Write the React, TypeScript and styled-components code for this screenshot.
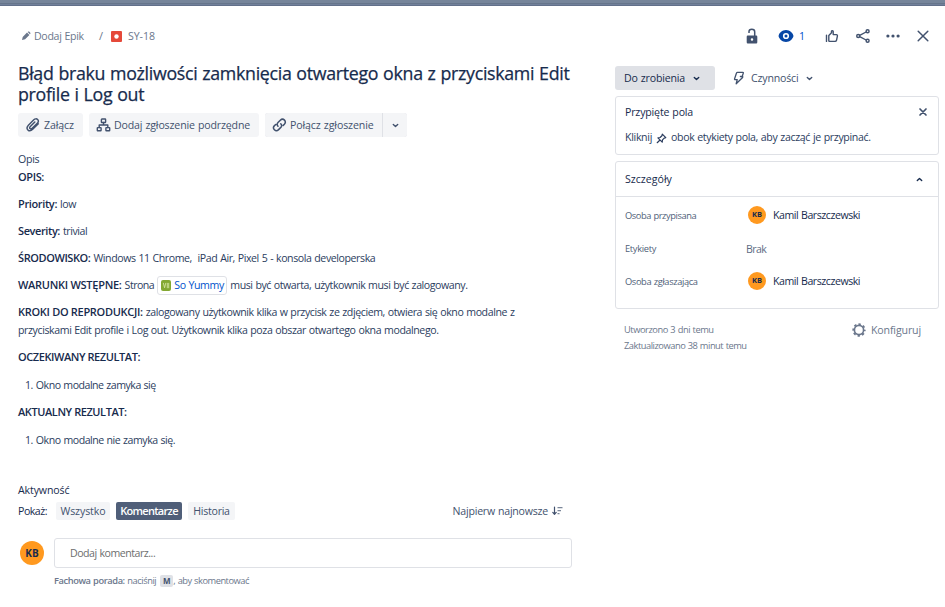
import React from "react";
import styled, { createGlobalStyle } from "styled-components";

const ink = "#172b4d";
const body = "#2b3d5e";
const slate = "#42526e";
const muted = "#6b778c";
const line = "#dfe1e6";

const GlobalStyle = createGlobalStyle`
  * { box-sizing: border-box; }
  body { margin: 0; background: #fff; font-family: "Open Sans", "Noto Sans", sans-serif; color: ${ink}; }
  button { font: inherit; border: 0; padding: 0; background: none; color: inherit; }
`;

const T = styled.span<{ $ls?: number; $c?: string }>`
  display: block;
  letter-spacing: ${(p) => p.$ls ?? -0.35}px;
  word-spacing: 0.5px;
  font-size: 10.6px;
  line-height: 18px;
  font-weight: 400;
  color: ${(p) => p.$c ?? "inherit"};
  white-space: pre;
`;
const Strong = styled(T)`
  font-size: 11px;
  font-weight: 600;
  word-spacing: 0;
`;
const Small = styled(T)<{ $bold?: boolean }>`
  font-size: 9.3px;
  line-height: 16px;
  font-weight: ${(p) => (p.$bold ? 600 : 400)};
`;

const Page = styled.div`
  height: 607px;
  display: flex;
  flex-direction: column;
  overflow: hidden;
`;
const Backdrop = styled.div`
  height: 6px;
  flex: none;
  background: linear-gradient(#76859a 0 3px, #66758b 3px 4px, #71809a 4px 5px, #62708a 5px 6px);
`;
const Modal = styled.main`
  flex: 1;
  display: grid;
  grid-template-columns: 554px 324px;
  column-gap: 43px;
  padding: 18px 6px 0 18px;
`;
const Column = styled.section`
  display: flex;
  flex-direction: column;
  min-width: 0;
`;

const Breadcrumbs = styled.nav`
  height: 24px;
  display: flex;
  align-items: center;
  color: ${muted};
  padding-left: 3px;
`;
const Slash = styled.span`
  font-size: 11px;
  line-height: 18px;
  width: 5px;
  margin: 0 7px 0 16px;
`;
const Svg = styled.svg`
  display: block;
  flex: none;
`;
const EpicLink = styled.span`
  display: flex;
  align-items: center;
  width: 62px;
  gap: 3px;
`;
const IssueLink = styled.span`
  display: flex;
  align-items: center;
  gap: 6px;
`;

const Title = styled.h1`
  margin: 15px 0 0;
  height: 42px;
  font-size: 17.8px;
  line-height: 21px;
  font-weight: 500;
  letter-spacing: -0.31px;
  word-spacing: 0.6px;
  -webkit-text-stroke: 0.25px ${ink};
`;

const QuickActions = styled.div`
  display: flex;
  gap: 6px;
  margin-top: 8px;
  height: 24px;
`;
const ActionButton = styled.button<{ $width: number }>`
  width: ${(p) => p.$width}px;
  height: 24px;
  display: flex;
  align-items: center;
  gap: 3px;
  padding-left: 7px;
  border-radius: 3px;
  background: #f4f5f7;
  color: ${slate};
`;
const SplitButton = styled.div`
  display: flex;
  gap: 1px;
  background: ${line};
  border-radius: 3px;
  overflow: hidden;
  & > button { border-radius: 0; }
`;
const SplitArrow = styled.button`
  width: 24px;
  display: grid;
  place-items: center;
  background: #f4f5f7;
  color: ${slate};
`;

const Description = styled.article`
  display: flex;
  flex-direction: column;
  margin-top: 13px;
  color: ${body};
`;
const SectionLabel = styled.h2`
  margin: 0;
  height: 18px;
  font-weight: 400;
`;
const Paragraph = styled.p`
  margin: 0 0 9px;
`;
const Line = styled.span`
  display: flex;
  height: 18px;
  align-items: center;
  gap: 3px;
  & > ${Strong} { color: ${ink}; }
`;
const OrderedList = styled.ol`
  list-style: none;
  margin: 1px 0 9px 7px;
  padding: 0;
`;
const OrderedItem = styled.li`
  display: flex;
  align-items: center;
  height: 18px;
  gap: 3px;
`;
const SmartLink = styled.a`
  display: flex;
  align-items: center;
  gap: 3px;
  width: 70px;
  height: 19px;
  padding-left: 3px;
  border: 1px solid ${line};
  border-radius: 3px;
  color: #0052cc;
`;

const Activity = styled.section`
  margin-top: 23px;
  display: flex;
  flex-direction: column;
`;
const FilterRow = styled.div`
  display: flex;
  align-items: center;
  height: 18px;
  margin-top: 3px;
`;
const Filters = styled.div`
  display: flex;
  gap: 6px;
  flex: 1;
`;
const FilterLabel = styled.span`
  width: 38px;
`;
const Filter = styled.button<{ $width: number; $active?: boolean }>`
  width: ${(p) => p.$width}px;
  height: 18px;
  border-radius: 2px;
  background: ${(p) => (p.$active ? "#505f79" : "#f4f5f7")};
  color: ${(p) => (p.$active ? "#fff" : slate)};
`;
const SortButton = styled.button`
  display: flex;
  align-items: center;
  gap: 4px;
  color: ${slate};
  margin-right: 9px;
`;
const CommentRow = styled.div`
  display: flex;
  align-items: center;
  margin: 18px 0 0 2px;
`;
const Avatar = styled.span<{ $d: number }>`
  width: ${(p) => p.$d}px;
  height: ${(p) => p.$d}px;
  flex: none;
  display: grid;
  place-items: center;
  border-radius: 50%;
  background: #ff991f;
  color: ${ink};
  font-size: ${(p) => (p.$d > 20 ? 10 : 7.5)}px;
  font-weight: 700;
  line-height: 1;
`;
const CommentBox = styled.div`
  flex: 1;
  height: 30px;
  margin-left: 10px;
  padding: 0 15px;
  display: flex;
  align-items: center;
  border: 1px solid ${line};
  border-radius: 3px;
  color: #6d6e6e;
`;
const Tip = styled.div`
  display: flex;
  align-items: center;
  height: 12px;
  margin: 7px 0 0 36px;
  color: ${muted};
`;
const Key = styled.kbd`
  width: 13px;
  height: 12px;
  margin-left: 4px;
  border-radius: 2px;
  background: ${line};
  color: ${slate};
  font: 700 8px/12px "Open Sans", sans-serif;
  text-align: center;
`;

const Toolbar = styled.div`
  display: flex;
  justify-content: flex-end;
  align-items: center;
  height: 24px;
  padding-right: 4px;
  color: ${slate};
`;
const IconButton = styled.button`
  width: 24px;
  height: 24px;
`;
const WatchButton = styled.button`
  display: flex;
  align-items: center;
  gap: 1px;
  width: 36px;
  margin: 0 10px 0 10px;
  color: #0747a6;
`;
const ToolGroup = styled.div`
  display: flex;
  gap: 6px;
  & > :first-child { margin-right: 1px; }
`;
const StatusRow = styled.div`
  display: flex;
  margin-top: 18px;
  height: 24px;
`;
const StatusButton = styled.button`
  width: 100px;
  display: flex;
  align-items: center;
  gap: 7px;
  padding-left: 9px;
  border-radius: 3px;
  background: ${line};
  color: ${ink};
`;
const AutomationButton = styled.button`
  display: flex;
  align-items: center;
  gap: 6px;
  margin-left: 18px;
  color: ${slate};
`;

const Panel = styled.section<{ $height: number }>`
  height: ${(p) => p.$height}px;
  margin-top: 6px;
  border: 1px solid ${line};
  border-radius: 3px;
`;
const PinnedHeader = styled.header`
  display: flex;
  align-items: center;
  justify-content: space-between;
  height: 18px;
  margin-top: 6px;
  padding: 0 10px 0 9px;
`;
const PinnedHint = styled.p`
  display: flex;
  align-items: center;
  height: 18px;
  margin: 7px 0 0 9px;
  color: ${body};
`;
const PinSlot = styled.span`
  margin: 2px 4px 0 4px;
`;
const DetailsHeader = styled.header`
  display: flex;
  align-items: center;
  justify-content: space-between;
  height: 35px;
  padding: 0 14px 0 9px;
  border-bottom: 1px solid ${line};
`;
const Fields = styled.dl`
  margin: 2px 0 0;
`;
const FieldRow = styled.div`
  display: grid;
  grid-template-columns: 121px 1fr;
  align-items: center;
  height: 33px;
  padding-left: 9px;
`;
const FieldName = styled.dt`
  color: #505f79;
`;
const FieldValue = styled.dd`
  margin: 0;
  display: flex;
  align-items: center;
`;
const Person = styled.span`
  display: flex;
  align-items: center;
  gap: 7px;
  padding-left: 2px;
  margin-top: -1px;
`;
const Footer = styled.footer`
  display: flex;
  justify-content: space-between;
  padding: 12px 18px 0 9px;
  color: ${muted};
`;
const Timestamps = styled.div`
  display: flex;
  flex-direction: column;
  padding-top: 1px;
`;
const ConfigureButton = styled.button`
  display: flex;
  align-items: center;
  gap: 5px;
  height: 18px;
`;

const stroke = { fill: "none", stroke: "currentColor", strokeLinecap: "round", strokeLinejoin: "round" } as const;

const Chevron = ({ up = false }: { up?: boolean }) => (
  <Svg width="9" height="9" viewBox="0 0 9 9">
    <path d={up ? "M2.3 5.6 4.5 3.5 6.7 5.6" : "M2.3 3.5 4.5 5.6 6.7 3.5"} {...stroke} strokeWidth="1.4" />
  </Svg>
);
const Pencil = () => (
  <Svg width="10" height="10" viewBox="0 0 10 10">
    <path d="M1 9l.7-3.100 4.300-4.300 2.400 2.400-4.300 4.300zM6.700 1l.5-.4q.5-.3.9 0l1.200 1.200q.4.4 0 .9l-.4.5z" fill="currentColor" />
  </Svg>
);
const BugIcon = () => (
  <Svg width="11" height="11" viewBox="0 0 11 11">
    <rect width="11" height="11" rx="1" fill="#e5493a" />
    <circle cx="5.5" cy="5.5" r="2.2" fill="#fff" />
  </Svg>
);
const Paperclip = () => (
  <Svg width="16" height="16" viewBox="0 0 16 16">
    <path d="M13.3 6.7 7.7 12.3C6.2 13.8 4.2 14.2 2.9 12.9 1.6 11.6 2 9.7 3.4 8.2L8.8 2.8C9.9 1.7 11.6 1.5 12.6 2.5 13.6 3.5 13.4 5.1 12.3 6.2L7.2 11.3C6.5 12 5.6 12.2 5 11.6 4.4 11 4.6 10.1 5.3 9.4L9.8 4.9" {...stroke} strokeWidth="1.45" />
  </Svg>
);
const ChildIssue = () => (
  <Svg width="15" height="14" viewBox="0 0 15 14">
    <path d="M7.5 4.5V7M3.200 9.5V7h8.600v2.5" {...stroke} strokeWidth="1.4" />
    <rect x="5.4" y="1" width="4.2" height="3.5" rx=".5" {...stroke} strokeWidth="1.4" />
    <rect x="1.3" y="9.6" width="3.8" height="3.2" rx=".5" {...stroke} strokeWidth="1.4" />
    <rect x="9.9" y="9.6" width="3.8" height="3.2" rx=".5" {...stroke} strokeWidth="1.4" />
  </Svg>
);
const LinkIcon = () => (
  <Svg width="15" height="14" viewBox="0 0 15 14">
    <path d="M6 8.2C4.9 7 5 5.5 6 4.5L8.3 2.2C9.6 .9 11.3 .9 12.5 2.1 13.7 3.3 13.6 5 12.4 6.2L11.2 7.4M8.8 5.7C9.9 6.9 9.9 8.4 8.8 9.4L6.6 11.6C5.3 12.9 3.6 12.9 2.4 11.7 1.2 10.5 1.3 8.8 2.5 7.6L3.7 6.5" {...stroke} strokeWidth="1.5" />
  </Svg>
);
const SiteIcon = () => (
  <Svg width="10" height="11" viewBox="0 0 10 11">
    <rect width="10" height="11" rx="2" fill="#83a832" />
    <path d="M2.4 3.3 3.6 7.8 4.7 3.3M6.3 3.3v4.5M7.7 3.3v4.5" {...stroke} stroke="#d9e8a9" strokeWidth=".8" />
  </Svg>
);
const SortIcon = () => (
  <Svg width="11" height="10" viewBox="0 0 11 10">
    <path d="M2.5 1v7M.8 6.4l1.7 1.9 1.7-1.9" {...stroke} strokeWidth="1.2" />
    <path d="M5.500 1.600H10.500M5.500 4.600H9M5.500 7.600H7.500" {...stroke} strokeLinecap="butt" strokeWidth="1.400" opacity=".7" />
  </Svg>
);
const Unlock = () => (
  <Svg width="24" height="24" viewBox="0 0 24 24">
    <path d="M9 9V7.600C9 6 10.200 5.200 11.800 5.200S14.700 6.200 14.700 7.700V12.500" {...stroke} strokeLinecap="butt" strokeWidth="1.500" />
    <path fillRule="evenodd" d="M7.800 11.500h8.400q1.100 0 1.100 1.200v5.500q0 1.200-1.100 1.200H7.800q-1.100 0-1.100-1.200v-5.500q0-1.200 1.100-1.200zm4.200 2.700a1.250 1.250 0 1 0 0 2.500 1.250 1.250 0 0 0 0-2.500z" fill="currentColor" />
  </Svg>
);
const Eye = () => (
  <Svg width="24" height="24" viewBox="0 0 24 24">
    <path d="M12 6.100c4 0 6.400 2.900 7.200 4.900q.5 1 0 2c-.8 2-3.200 4.900-7.200 4.900S5.600 15 4.800 13q-.5-1 0-2C5.600 9 8 6.100 12 6.100z" fill="currentColor" />
    <circle cx="12" cy="12" r="2.300" fill="none" stroke="#fff" strokeWidth="1.600" />
  </Svg>
);
const ThumbUp = () => (
  <Svg width="24" height="24" viewBox="0 0 24 24">
    <path d="M6.500 11.200v6.200M8.800 16.800V11.500L11.500 8.700V7.200Q11.600 6.600 12.300 6.600T13.200 7.500V10.600H16.300Q17.700 10.800 17.400 12.100L16.500 16.300Q16.200 17.400 15.200 17.400H9.400Q8.800 17.400 8.800 16.800" {...stroke} strokeWidth="1.400" />
  </Svg>
);
const Share = () => (
  <Svg width="24" height="24" viewBox="0 0 24 24">
    <g {...stroke} strokeWidth="1.400">
      <circle cx="7.200" cy="12" r="1.500" />
      <circle cx="16.600" cy="7.200" r="1.500" />
      <circle cx="16.600" cy="16.800" r="1.500" />
      <path d="M8.700 11.300 15.100 8M8.700 12.700 15.100 16" />
    </g>
  </Svg>
);
const More = () => (
  <Svg width="24" height="24" viewBox="0 0 24 24">
    <g fill="currentColor">
      <circle cx="6.900" cy="12" r="1.600" />
      <circle cx="12" cy="12" r="1.600" />
      <circle cx="17.100" cy="12" r="1.600" />
    </g>
  </Svg>
);
const Close = () => (
  <Svg width="24" height="24" viewBox="0 0 24 24">
    <path d="M7.200 7.200l9.600 9.600M16.800 7.200l-9.600 9.600" {...stroke} strokeWidth="1.500" />
  </Svg>
);
const Bolt = () => (
  <Svg width="12" height="14" viewBox="0 0 12 14">
    <path d="M4.500 1.300H9.700Q10.500 1.300 10.300 2.100L9.200 5.500Q10.200 5.600 9.600 6.500L3.200 12.700 4.200 8.700H2.200Q1.300 8.700 1.600 7.800L3.500 2Q3.700 1.300 4.500 1.300zM9.200 5.500H7.400" {...stroke} strokeWidth="1.300" />
  </Svg>
);
const SmallClose = () => (
  <Svg width="10" height="10" viewBox="0 0 10 10">
    <path d="M2 2l6 6M8 2l-6 6" {...stroke} stroke={slate} strokeWidth="1.700" />
  </Svg>
);
const Pin = () => (
  <Svg width="11" height="11" viewBox="0 0 11 11">
    <path d="M6.300 1.200 9.800 4.700 8.200 5.100 6.500 6.900 6.200 9.100 1.900 4.800 4.100 4.500 5.900 2.800zM4 7 1.200 9.700" {...stroke} strokeWidth="1.200" />
  </Svg>
);
const Gear = () => (
  <Svg width="14" height="14" viewBox="0 0 14 14">
    <circle cx="7" cy="7" r="4.600" fill="none" stroke="currentColor" strokeWidth="1.700" />
    <circle cx="7" cy="7" r="5.800" fill="none" stroke="currentColor" strokeWidth="1.700" strokeDasharray="2.400 2.155" strokeDashoffset="1.200" />
  </Svg>
);

const fields = [
  { name: "Osoba przypisana", ls: -0.43, person: true },
  { name: "Etykiety", ls: -0.31, person: false },
  { name: "Osoba zgłaszająca", ls: -0.38, person: true },
];

export default function App() {
  return (
    <Page>
      <GlobalStyle />
      <Backdrop />
      <Modal>
        <Column>
          <Breadcrumbs>
            <EpicLink><Pencil /><T $ls={-0.32}>Dodaj Epik</T></EpicLink>
            <Slash>/</Slash>
            <IssueLink><BugIcon /><T $ls={-0.07}>SY-18</T></IssueLink>
          </Breadcrumbs>
          <Title>Błąd braku możliwości zamknięcia otwartego okna z przyciskami Edit profile i Log out</Title>
          <QuickActions>
            <ActionButton $width={65}><Paperclip /><T $ls={-0.1}>Załącz</T></ActionButton>
            <ActionButton $width={170}><ChildIssue /><T $ls={-0.15}>Dodaj zgłoszenie podrzędne</T></ActionButton>
            <SplitButton>
              <ActionButton $width={117}><LinkIcon /><T $ls={-0.11}>Połącz zgłoszenie</T></ActionButton>
              <SplitArrow><Chevron /></SplitArrow>
            </SplitButton>
          </QuickActions>
          <Description>
            <SectionLabel><T $ls={-0.26}>Opis</T></SectionLabel>
            <Paragraph><Line><Strong $ls={-0.37}>OPIS:</Strong></Line></Paragraph>
            <Paragraph><Line><Strong $ls={-0.37}>Priority:</Strong><T $ls={-0.4}>low</T></Line></Paragraph>
            <Paragraph><Line><Strong $ls={-0.41}>Severity:</Strong><T $ls={-0.45}>trivial</T></Line></Paragraph>
            <Paragraph><Line><Strong $ls={-0.41}>ŚRODOWISKO:</Strong><T $ls={-0.42}>{"Windows 11 Chrome,  iPad Air, Pixel 5 - konsola developerska"}</T></Line></Paragraph>
            <Paragraph>
              <Line>
                <Strong $ls={-0.28}>WARUNKI WSTĘPNE:</Strong>
                <T $ls={-0.5}>Strona</T>
                <SmartLink><SiteIcon /><T $ls={-0.4}>So Yummy</T></SmartLink>
                <T $ls={-0.43}>musi być otwarta, użytkownik musi być zalogowany.</T>
              </Line>
            </Paragraph>
            <Paragraph>
              <Line><Strong $ls={-0.3}>KROKI DO REPRODUKCJI:</Strong><T $ls={-0.41}>zalogowany użytkownik klika w przycisk ze zdjęciem, otwiera się okno modalne z</T></Line>
              <Line><T $ls={-0.4}>przyciskami Edit profile i Log out. Użytkownik klika poza obszar otwartego okna modalnego.</T></Line>
            </Paragraph>
            <Paragraph><Line><Strong $ls={-0.42}>OCZEKIWANY REZULTAT:</Strong></Line></Paragraph>
            <OrderedList><OrderedItem><T $ls={-0.5}>1.</T><T $ls={-0.49}>Okno modalne zamyka się</T></OrderedItem></OrderedList>
            <Paragraph><Line><Strong $ls={-0.42}>AKTUALNY REZULTAT:</Strong></Line></Paragraph>
            <OrderedList><OrderedItem><T $ls={-0.5}>1.</T><T $ls={-0.47}>Okno modalne nie zamyka się.</T></OrderedItem></OrderedList>
          </Description>
          <Activity>
            <SectionLabel><T $ls={-0.13}>Aktywność</T></SectionLabel>
            <FilterRow>
              <FilterLabel><T $ls={-0.48}>Pokaż:</T></FilterLabel>
              <Filters>
                <Filter $width={54}><T $ls={-0.12}>Wszystko</T></Filter>
                <Filter $width={66} $active><Strong $ls={-0.71}>Komentarze</Strong></Filter>
                <Filter $width={47}><T $ls={-0.26}>Historia</T></Filter>
              </Filters>
              <SortButton><T $ls={-0.23}>Najpierw najnowsze</T><SortIcon /></SortButton>
            </FilterRow>
            <CommentRow>
              <Avatar $d={24}>KB</Avatar>
              <CommentBox><T $ls={-0.48}>Dodaj komentarz...</T></CommentBox>
            </CommentRow>
            <Tip>
              <Small $bold $ls={-0.42}>{"Fachowa porada: "}</Small>
              <Small $ls={-0.43}>naciśnij</Small>
              <Key>M</Key>
              <Small $ls={-0.49}>, aby skomentować</Small>
            </Tip>
          </Activity>
        </Column>

        <Column>
          <Toolbar>
            <IconButton><Unlock /></IconButton>
            <WatchButton><Eye /><T $c="#0052cc">1</T></WatchButton>
            <ToolGroup>
              <IconButton><ThumbUp /></IconButton>
              <IconButton><Share /></IconButton>
              <IconButton><More /></IconButton>
              <IconButton><Close /></IconButton>
            </ToolGroup>
          </Toolbar>
          <StatusRow>
            <StatusButton><T $ls={-0.18}>Do zrobienia</T><Chevron /></StatusButton>
            <AutomationButton><Bolt /><T $ls={-0.18}>Czynności</T><Chevron /></AutomationButton>
          </StatusRow>
          <Panel $height={59}>
            <PinnedHeader><T $ls={-0.17}>Przypięte pola</T><SmallClose /></PinnedHeader>
            <PinnedHint><T $ls={-0.32}>Kliknij</T><PinSlot><Pin /></PinSlot><T $ls={-0.36}>obok etykiety pola, aby zacząć je przypinać.</T></PinnedHint>
          </Panel>
          <Panel $height={148}>
            <DetailsHeader><T $ls={0}>Szczegóły</T><Chevron up /></DetailsHeader>
            <Fields>
              {fields.map((f) => (
                <FieldRow key={f.name}>
                  <FieldName><Small $ls={f.ls}>{f.name}</Small></FieldName>
                  <FieldValue>
                    {f.person ? (
                      <Person>
                        <Avatar $d={18}>KB</Avatar>
                        <T $ls={-0.46}>Kamil Barszczewski</T>
                      </Person>
                    ) : (
                      <T $ls={-0.6} $c="#5e6c84">Brak</T>
                    )}
                  </FieldValue>
                </FieldRow>
              ))}
            </Fields>
          </Panel>
          <Footer>
            <Timestamps>
              <Small $ls={-0.45}>Utworzono 3 dni temu</Small>
              <Small $ls={-0.47}>Zaktualizowano 38 minut temu</Small>
            </Timestamps>
            <ConfigureButton><Gear /><T $ls={-0.13}>Konfiguruj</T></ConfigureButton>
          </Footer>
        </Column>
      </Modal>
    </Page>
  );
}
